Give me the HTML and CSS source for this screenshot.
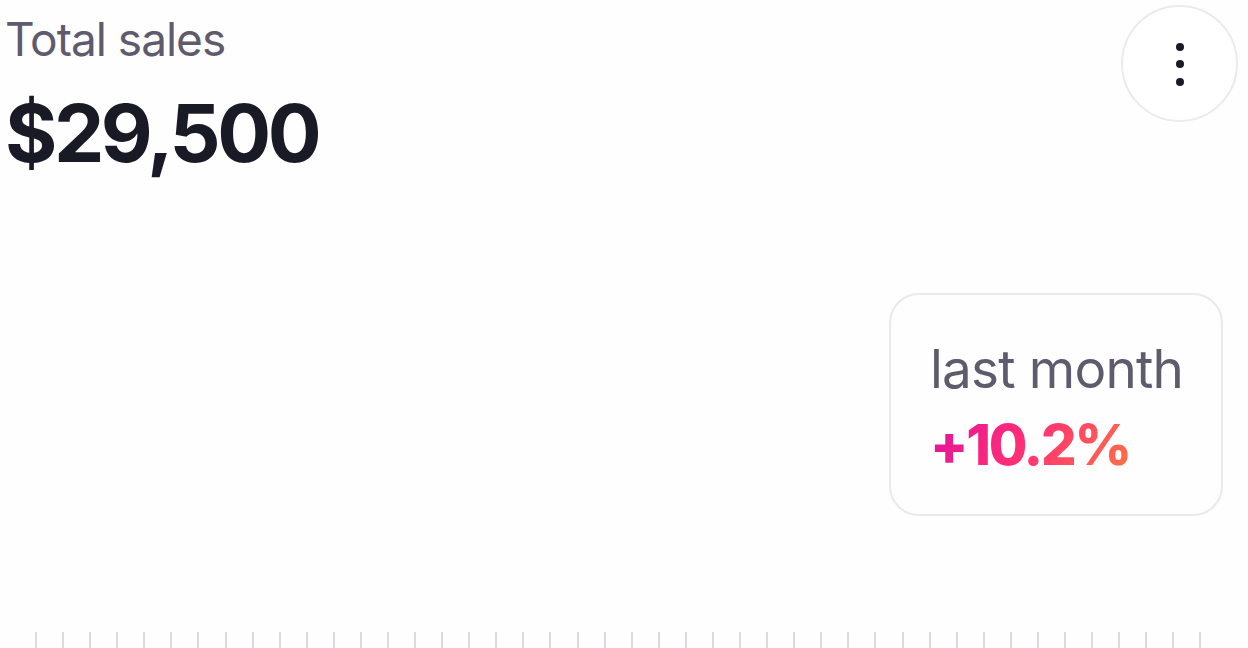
FILE: index.html
```html
<!DOCTYPE html>
<html lang="en">
<head>
    <meta charset="UTF-8">
    <meta name="viewport" content="width=device-width, initial-scale=1.0">
    <title>Total sales</title>
    <link rel="stylesheet" href="styles.css">
</head>
<body>
    <div class="widget">
        <div class="header">
            <div class="summary">
                <div class="label">Total sales</div>
                <div class="amount">$29,500</div>
            </div>
            <button class="menu-button" aria-label="More options">
                <svg width="10" height="44" viewBox="0 0 10 44">
                    <circle cx="5" cy="5" r="4" fill="#181a26"/>
                    <circle cx="5" cy="22" r="4" fill="#181a26"/>
                    <circle cx="5" cy="40" r="4" fill="#181a26"/>
                </svg>
            </button>
        </div>
        <div class="chart">
            <div class="stat-card">
                <div class="stat-label">last month</div>
                <div class="stat-value">+10.2%</div>
            </div>
        </div>
        <div class="ticks" id="ticks"></div>
    </div>

    <script>
        document.addEventListener('DOMContentLoaded', function () {
            const ticks = document.getElementById('ticks');
            for (let i = 0; i < 44; i++) {
                const tick = document.createElement('span');
                tick.className = 'tick';
                ticks.appendChild(tick);
            }
        });
    </script>
</body>
</html>
```

FILE: styles.css
```css
* {
    padding: 0;
    margin: 0;
    box-sizing: border-box;
}

body {
    font-family: Inter, 'Noto Sans', sans-serif;
    background-color: #fefefe;
    height: 100vh;
    overflow: hidden;
}

.widget {
    display: flex;
    flex-direction: column;
    height: 100vh;
}

.header {
    display: flex;
    justify-content: space-between;
    align-items: flex-start;
    padding: 5px 10px 0 5px;
}

.label {
    font-size: 46px;
    line-height: 56px;
    color: #5f5b6d;
    margin-top: 6px;
    letter-spacing: -1px;
}

.amount {
    font-size: 80px;
    font-weight: 700;
    line-height: 100px;
    color: #181a26;
    letter-spacing: -3.5px;
    margin-top: 16px;
}

.menu-button {
    width: 117px;
    height: 117px;
    border-radius: 50%;
    border: 2px solid #ebeaef;
    background-color: #fff;
    display: flex;
    align-items: center;
    justify-content: center;
    cursor: pointer;
}

.chart {
    flex: 1;
    display: flex;
    justify-content: flex-end;
    align-items: flex-start;
    padding: 110px 25px 0 0;
}

.stat-card {
    width: 334px;
    height: 223px;
    border: 2px solid #e9e8ee;
    border-radius: 30px;
    background-color: #fefefe;
    padding: 42px 0 0 39px;
}

.stat-label {
    font-size: 53px;
    line-height: 64px;
    color: #5f5b6d;
    letter-spacing: -0.8px;
}

.stat-value {
    font-size: 56px;
    font-weight: 800;
    line-height: 72px;
    letter-spacing: -2.2px;
    margin-top: 8px;
    background: linear-gradient(120deg, #e0109f 0%, #ff2d78 45%, #ff7443 100%);
    -webkit-background-clip: text;
    background-clip: text;
    color: transparent;
    display: inline-block;
}

.ticks {
    display: flex;
    justify-content: space-between;
    height: 16px;
    padding: 0 46px 0 35px;
}

.tick {
    width: 2px;
    height: 16px;
    background-color: #dcdae0;
}
```
